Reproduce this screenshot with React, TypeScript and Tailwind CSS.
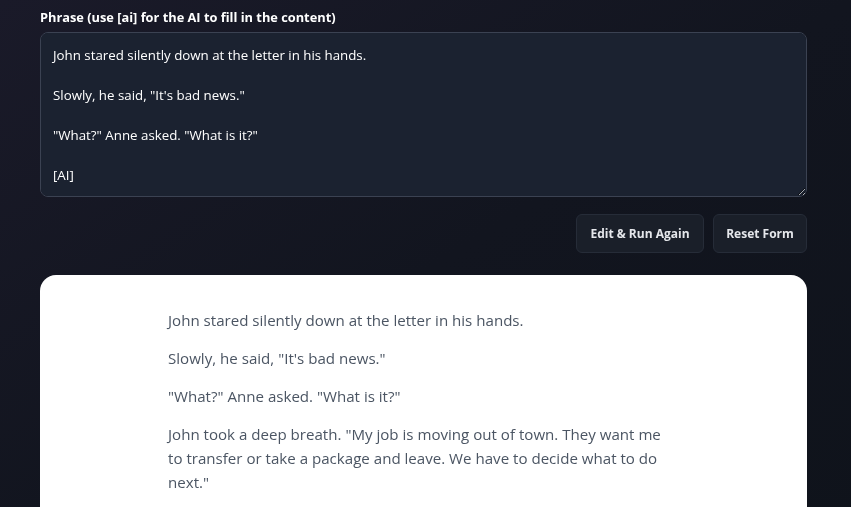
import React from "react";

const phrase = `John stared silently down at the letter in his hands.

Slowly, he said, "It's bad news."

"What?" Anne asked. "What is it?"

[AI]`;

const output = [
  "John stared silently down at the letter in his hands.",
  'Slowly, he said, "It\'s bad news."',
  '"What?" Anne asked. "What is it?"',
  'John took a deep breath. "My job is moving out of town. They want me to transfer or take a package and leave. We have to decide what to do next."',
];

export default function App() {
  return (
    <div
      className="min-h-screen w-full bg-gradient-to-br from-[#1a1a29] via-[#12151f] to-[#0f131b] pl-10 pr-[44px] pt-[9px] text-white"
      style={{ fontFamily: '"Open Sans", "Noto Sans", sans-serif' }}
    >
      <label className="block text-[12.8px] font-bold leading-[16px] text-white">
        Phrase (use [ai] for the AI to fill in the content)
      </label>
      <textarea
        defaultValue={phrase}
        rows={7}
        className="mt-[7px] block h-[165px] w-full resize-y rounded-lg border border-[#3b4252] bg-[#1b2230] px-3 py-[12px] text-[13.3px] leading-[20px] text-white outline-none"
        style={{ fontFamily: "inherit" }}
      />
      <div className="mt-[17px] flex justify-end gap-[9px]">
        <button
          type="button"
          className="h-[39px] w-[128px] rounded-md border border-[#262c38] bg-[#1a1f29] text-[12px] font-bold text-[#e5e7eb]"
        >
          Edit &amp; Run Again
        </button>
        <button
          type="button"
          className="h-[39px] w-[94px] rounded-md border border-[#262c38] bg-[#1a1f29] text-[12px] font-bold text-[#e5e7eb]"
        >
          Reset Form
        </button>
      </div>
      <div className="mt-[22px] rounded-t-2xl bg-white pl-[128px] pr-[134px] pt-[33px] pb-8">
        <div className="max-w-[505px] text-[15.1px] leading-[24px] text-[#4b5563]">
          {output.map((p, i) => (
            <p key={i} className="mb-[14px]">
              {p}
            </p>
          ))}
        </div>
      </div>
    </div>
  );
}
